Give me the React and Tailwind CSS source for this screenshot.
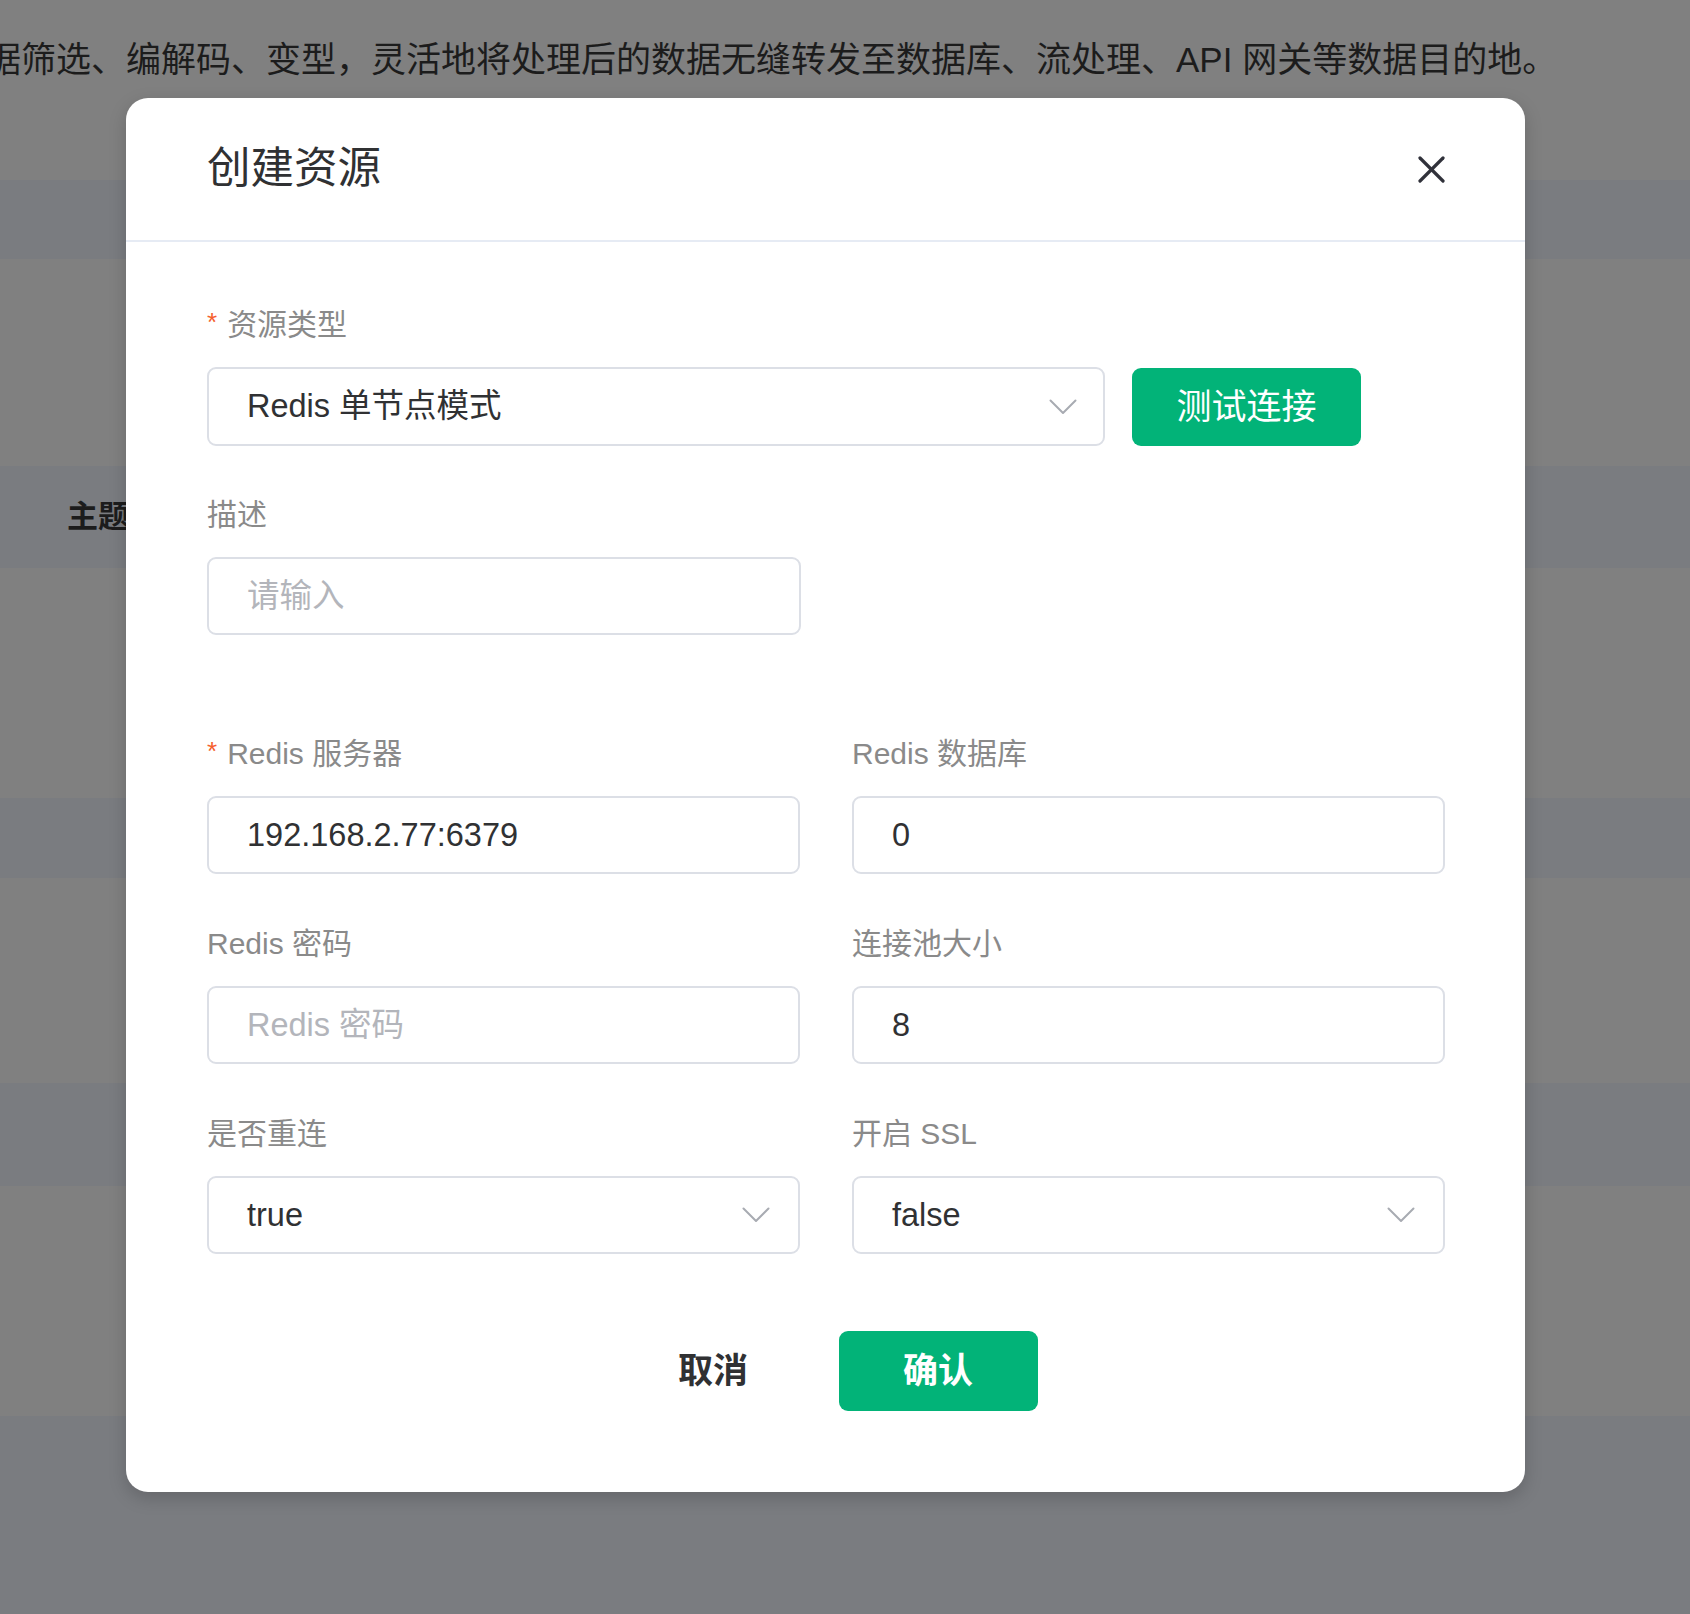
import { useState } from 'react';

const FONT = "font-['Liberation_Sans','Noto_Sans_CJK_SC',sans-serif]";

function Chevron() {
  return (
    <svg width="28" height="16" viewBox="0 0 28 16" fill="none" stroke="#a8abb2" strokeWidth="2" strokeLinecap="round" strokeLinejoin="round">
      <polyline points="1.5 1.5 14 14 26.5 1.5" />
    </svg>
  );
}

function Label({ children, required }) {
  return (
    <div className="flex items-center h-[40px] text-[30px] leading-[40px] text-[#8a8a8a]">
      {required && <span className="text-[#f5602e] text-[26px] mr-[10px] -mt-[6px]">*</span>}
      <span>{children}</span>
    </div>
  );
}

function Field({ value, placeholder, select }) {
  return (
    <div className="mt-[22px] h-[78px] border-2 border-[#dcdfe6] rounded-[9px] bg-white flex items-center pl-[38px] pr-[28px]">
      <span className={`flex-1 text-[32.5px] leading-none ${value ? 'text-[#303133]' : 'text-[#b3b5bb]'}`}>
        {value || placeholder}
      </span>
      {select && <Chevron />}
    </div>
  );
}

function Item({ label, required, className = '', ...rest }) {
  return (
    <div className={className}>
      <Label required={required}>{label}</Label>
      <Field {...rest} />
    </div>
  );
}

// background page bands (light / dark stripes behind the mask)
const BANDS = [
  { h: 180, dark: false },
  { h: 79, dark: true },
  { h: 207, dark: false },
  { h: 102, dark: true, text: '主题' },
  { h: 230, dark: false },
  { h: 80, dark: true },
  { h: 205, dark: false },
  { h: 103, dark: true },
  { h: 230, dark: false },
  { h: 198, dark: true },
];

export default function App() {
  const [open] = useState(true);

  return (
    <div className={`relative w-[1690px] h-[1614px] overflow-hidden bg-[#808080] ${FONT}`}>
      <div className="flex flex-col">
        {BANDS.map((b, i) => (
          <div
            key={i}
            style={{ height: b.h }}
            className={`flex items-center ${b.dark ? 'bg-[#7a7c80]' : 'bg-[#808080]'}`}
          >
            {i === 0 && (
              <p className="ml-[-14px] mt-[-62px] whitespace-nowrap text-[35px] leading-none text-[#1c1c1c]">
                据筛选、编解码、变型，灵活地将处理后的数据无缝转发至数据库、流处理、API 网关等数据目的地。
              </p>
            )}
            {b.text && (
              <span className="ml-[67px] text-[31px] font-bold text-[#1c1c1c]">主题名称</span>
            )}
          </div>
        ))}
      </div>

      {open && (
        <div className="absolute left-[126px] top-[98px] w-[1399px] h-[1394px] bg-white rounded-[22px] shadow-[0_6px_18px_rgba(0,0,0,0.18)] flex flex-col">
          <div className="h-[144px] shrink-0 flex items-center justify-between pl-[81px] pr-[80px] border-b-2 border-[#e6ebf4]">
            <h2 className="text-[43.5px] leading-none text-[#303133]">创建资源</h2>
            <svg width="27" height="27" viewBox="0 0 27 27" fill="none" stroke="#30313a" strokeWidth="3.2" strokeLinecap="round">
              <line x1="2" y1="2" x2="25" y2="25" />
              <line x1="25" y1="2" x2="2" y2="25" />
            </svg>
          </div>

          <div className="pl-[81px] pr-[80px] pt-[63px]">
            <div>
              <Label required>资源类型</Label>
              <div className="mt-[22px] flex items-center gap-[27px]">
                <div className="w-[898px] h-[79px] border-2 border-[#dcdfe6] rounded-[9px] flex items-center pl-[38px] pr-[26px]">
                  <span className="flex-1 text-[32.5px] leading-none text-[#303133]">Redis 单节点模式</span>
                  <Chevron />
                </div>
                <button className="w-[229px] h-[78px] rounded-[9px] bg-[#02b378] text-white text-[35px] leading-none">
                  测试连接
                </button>
              </div>
            </div>

            <Item className="mt-[49px] w-[594px]" label="描述" placeholder="请输入" />

            <div className="mt-[99px] grid grid-cols-2 gap-x-[52px] gap-y-[50px]">
              <Item label="Redis 服务器" required value="192.168.2.77:6379" />
              <Item label="Redis 数据库" value="0" />
              <Item label="Redis 密码" placeholder="Redis 密码" />
              <Item label="连接池大小" value="8" />
              <Item label="是否重连" value="true" select />
              <Item label="开启 SSL" value="false" select />
            </div>
          </div>

          <div className="mt-[77px] flex justify-center gap-[26px]">
            <button className="w-[199px] h-[80px] rounded-[9px] text-[35px] font-bold text-[#303133]">取消</button>
            <button className="w-[199px] h-[80px] rounded-[9px] bg-[#02b378] text-[35px] font-bold text-white">确认</button>
          </div>
        </div>
      )}
    </div>
  );
}
